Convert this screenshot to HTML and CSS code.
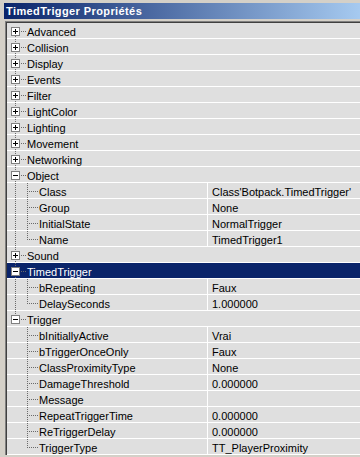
FILE: index.html
```html
<!DOCTYPE html>
<html lang="fr">
<head>
    <meta charset="UTF-8">
    <meta name="viewport" content="width=device-width, initial-scale=1.0">
    <title>TimedTrigger Propriétés</title>
    <link rel="stylesheet" href="styles.css">
</head>
<body>
    <div class="window">
        <div class="caption">TimedTrigger Propriétés</div>

        <div class="props">
            <!-- collapsed groups -->
            <div class="row cat trunk-first"><span class="box plus"></span><span class="conn"></span><span class="label">Advanced</span></div>
            <div class="row cat trunk"><span class="box plus"></span><span class="conn"></span><span class="label">Collision</span></div>
            <div class="row cat trunk"><span class="box plus"></span><span class="conn"></span><span class="label">Display</span></div>
            <div class="row cat trunk"><span class="box plus"></span><span class="conn"></span><span class="label">Events</span></div>
            <div class="row cat trunk"><span class="box plus"></span><span class="conn"></span><span class="label">Filter</span></div>
            <div class="row cat trunk"><span class="box plus"></span><span class="conn"></span><span class="label">LightColor</span></div>
            <div class="row cat trunk"><span class="box plus"></span><span class="conn"></span><span class="label">Lighting</span></div>
            <div class="row cat trunk"><span class="box plus"></span><span class="conn"></span><span class="label">Movement</span></div>
            <div class="row cat trunk"><span class="box plus"></span><span class="conn"></span><span class="label">Networking</span></div>

            <!-- Object -->
            <div class="row cat trunk"><span class="box minus"></span><span class="conn"></span><span class="label">Object</span></div>
            <div class="row prop trunk"><div class="name"><span class="branch"></span><span class="label">Class</span></div><div class="value">Class'Botpack.TimedTrigger'</div></div>
            <div class="row prop trunk"><div class="name"><span class="branch"></span><span class="label">Group</span></div><div class="value">None</div></div>
            <div class="row prop trunk"><div class="name"><span class="branch"></span><span class="label">InitialState</span></div><div class="value">NormalTrigger</div></div>
            <div class="row prop trunk"><div class="name"><span class="branch end"></span><span class="label">Name</span></div><div class="value">TimedTrigger1</div></div>

            <div class="row cat trunk"><span class="box plus"></span><span class="conn"></span><span class="label">Sound</span></div>

            <!-- TimedTrigger (selected) -->
            <div class="row cat trunk selected"><span class="box minus"></span><span class="conn"></span><span class="label">TimedTrigger</span></div>
            <div class="row prop trunk"><div class="name"><span class="branch"></span><span class="label">bRepeating</span></div><div class="value">Faux</div></div>
            <div class="row prop trunk"><div class="name"><span class="branch end"></span><span class="label">DelaySeconds</span></div><div class="value">1.000000</div></div>

            <!-- Trigger -->
            <div class="row cat trunk-last"><span class="box minus"></span><span class="conn"></span><span class="label">Trigger</span></div>
            <div class="row prop"><div class="name"><span class="branch"></span><span class="label">bInitiallyActive</span></div><div class="value">Vrai</div></div>
            <div class="row prop"><div class="name"><span class="branch"></span><span class="label">bTriggerOnceOnly</span></div><div class="value">Faux</div></div>
            <div class="row prop"><div class="name"><span class="branch"></span><span class="label">ClassProximityType</span></div><div class="value">None</div></div>
            <div class="row prop"><div class="name"><span class="branch"></span><span class="label">DamageThreshold</span></div><div class="value">0.000000</div></div>
            <div class="row prop"><div class="name"><span class="branch"></span><span class="label">Message</span></div><div class="value"></div></div>
            <div class="row prop"><div class="name"><span class="branch"></span><span class="label">RepeatTriggerTime</span></div><div class="value">0.000000</div></div>
            <div class="row prop"><div class="name"><span class="branch"></span><span class="label">ReTriggerDelay</span></div><div class="value">0.000000</div></div>
            <div class="row prop"><div class="name"><span class="branch end"></span><span class="label">TriggerType</span></div><div class="value">TT_PlayerProximity</div></div>
        </div>
    </div>
</body>
</html>
```

FILE: styles.css
```css
body {
    margin: 0;
    padding: 0;
    background-color: #d4d0c8;
    font-family: 'Liberation Sans', Arial, sans-serif;
    font-size: 11px;
    color: #000;
    overflow: hidden;
}
.window {
    padding: 3px 0 0 4px;
}
.caption {
    height: 16px;
    line-height: 17px;
    padding-left: 2px;
    margin-bottom: 2px;
    background: linear-gradient(to right, #0a246a, #a6caf0);
    color: #fff;
    font-weight: bold;
    letter-spacing: 0.4px;
    white-space: nowrap;
}
.props {
    margin-left: 1px;
    border-top: 1px solid #808080;
    border-left: 1px solid #808080;
    box-shadow: inset 1px 1px 0 #404040;
    padding: 1px 0 0 1px;
    background-color: #fff;
}
.row {
    display: flex;
    align-items: flex-start;
    height: 16px;
    box-sizing: border-box;
    border-bottom: 1px solid #fff;
    background-color: #dfdfdf;
    background-repeat: no-repeat;
    white-space: nowrap;
}
/* dotted vertical line of the top level */
.trunk, .trunk-first, .trunk-last {
    background-image: repeating-linear-gradient(to bottom, #6a6a6a 0 1px, transparent 1px 2px);
}
.trunk {
    background-position: 8px 0;
    background-size: 1px 100%;
}
.trunk-first {
    background-position: 8px 9px;
    background-size: 1px 7px;
}
.trunk-last {
    background-position: 8px 0;
    background-size: 1px 8px;
}
.selected {
    background-color: #0a246a;
    color: #fff;
}
.label {
    padding-top: 2px;
    line-height: 14px;
}
.box {
    flex: 0 0 auto;
    width: 7px;
    height: 7px;
    margin: 4px 0 0 4px;
    border: 1px solid #808080;
    background-color: #fff;
    background-repeat: no-repeat;
}
.plus {
    background-image: linear-gradient(#000, #000), linear-gradient(#000, #000);
    background-size: 5px 1px, 1px 5px;
    background-position: 1px 3px, 3px 1px;
}
.minus {
    background-image: linear-gradient(#000, #000);
    background-size: 5px 1px;
    background-position: 1px 3px;
}
.conn {
    flex: 0 0 6px;
    height: 15px;
    margin-right: 1px;
    background: repeating-linear-gradient(to right, #6a6a6a 0 1px, transparent 1px 2px) 1px 8px / 5px 1px no-repeat;
}
.prop .name {
    flex: 0 0 180px;
    display: flex;
    padding-left: 20px;
}
.branch {
    flex: 0 0 12px;
    height: 15px;
    background:
        repeating-linear-gradient(to right, #6a6a6a 0 1px, transparent 1px 2px) 2px 8px / 9px 1px no-repeat,
        repeating-linear-gradient(to bottom, #6a6a6a 0 1px, transparent 1px 2px) 0 0 / 1px 16px no-repeat;
}
.branch.end {
    background:
        repeating-linear-gradient(to right, #6a6a6a 0 1px, transparent 1px 2px) 2px 8px / 9px 1px no-repeat,
        repeating-linear-gradient(to bottom, #6a6a6a 0 1px, transparent 1px 2px) 0 0 / 1px 9px no-repeat;
}
.value {
    flex: 1;
    height: 15px;
    border-left: 1px solid #fff;
    padding: 2px 0 0 4px;
    line-height: 14px;
    box-sizing: border-box;
    overflow: hidden;
}
```
